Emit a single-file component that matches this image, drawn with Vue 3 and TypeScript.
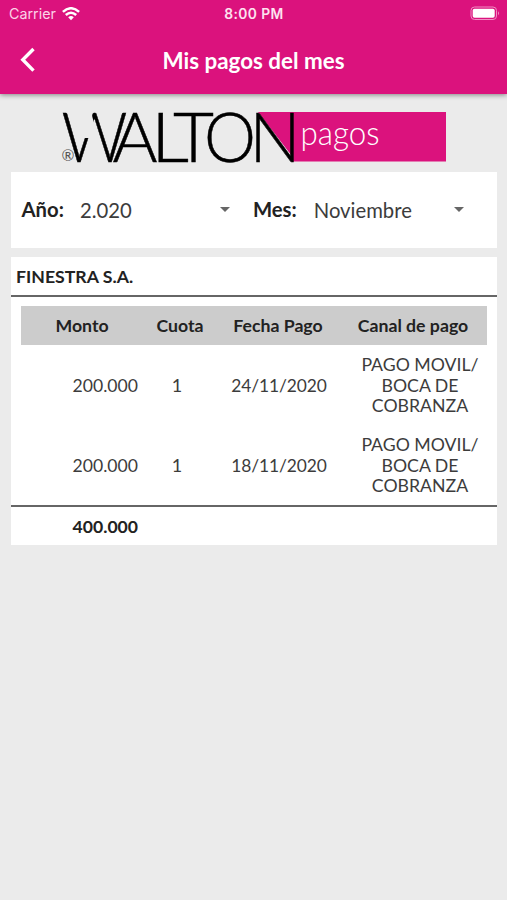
<script setup lang="ts">
interface Payment {
  amount: string
  installment: number
  date: string
  channel: string[]
}

interface LogoLetter {
  char: string
  x: number
  width: number
}

const columns: string[] = ['Monto', 'Cuota', 'Fecha Pago', 'Canal de pago']

const payments: Payment[] = [
  { amount: '200.000', installment: 1, date: '24/11/2020', channel: ['PAGO MOVIL/', 'BOCA DE', 'COBRANZA'] },
  { amount: '200.000', installment: 1, date: '18/11/2020', channel: ['PAGO MOVIL/', 'BOCA DE', 'COBRANZA'] },
]

const total = '400.000'

const letters: LogoLetter[] = [
  { char: 'A', x: 50.5, width: 45 },
  { char: 'L', x: 89, width: 38 },
  { char: 'T', x: 111, width: 41 },
  { char: 'O', x: 142, width: 52 },
  { char: 'N', x: 187.5, width: 51 },
]
</script>

<template>
  <div class="screen">
    <header class="top">
      <div class="status">
        <div class="carrier">
          <span>Carrier</span>
          <svg width="18" height="14" viewBox="0 0 18 14" fill="none" stroke="#fff" stroke-width="2.5">
            <path d="M0.9 4.9Q9-2.4 17.1 4.9" />
            <path d="M3.8 8Q9 3.4 14.2 8" />
            <path d="M6.2 10.2Q9 7.6 11.8 10.2L9 13.2Z" fill="#fff" stroke="none" />
          </svg>
        </div>
        <span class="clock">8:00 PM</span>
        <svg class="battery" width="31" height="15" viewBox="0 0 31 15">
          <rect x="1" y="1" width="25.5" height="12.5" rx="3.5" fill="none" stroke="#f08cc3" />
          <rect x="2.7" y="2.7" width="22" height="9" rx="1.8" fill="#fff" />
          <path d="M28 5.2Q30 7.2 28 9.3Z" fill="#f08cc3" />
        </svg>
      </div>
      <nav class="bar">
        <svg class="back" width="16" height="26" viewBox="0 0 16 26" fill="none" stroke="#fff" stroke-width="3.4">
          <path d="M13.5 2L2.8 12.8L13.5 23.6" />
        </svg>
        <h1>Mis pagos del mes</h1>
      </nav>
    </header>

    <svg class="logo" width="386" height="56" viewBox="0 0 386 56">
      <rect x="231" y="3" width="153" height="49.5" fill="#db127d" />
      <path d="M196 3H233V51Z" fill="#db127d" />
      <text class="letter" x="-0.5" y="52.5" textLength="66" lengthAdjust="spacingAndGlyphs">W</text>
      <!-- opening in the middle of the W -->
      <path d="M8 0H28L36.5 29H18Z" fill="#ebebeb" />
      <text
        v-for="letter in letters"
        :key="letter.char"
        class="letter"
        :x="letter.x"
        y="52.5"
        :textLength="letter.width"
        lengthAdjust="spacingAndGlyphs"
      >{{ letter.char }}</text>
      <text class="registered" x="-0.5" y="51.5">®</text>
      <text class="product" x="238.5" y="35.5" textLength="79" lengthAdjust="spacingAndGlyphs">pagos</text>
    </svg>

    <section class="filters">
      <label>Año:</label>
      <div class="select year">
        <span>2.020</span>
        <i class="caret"></i>
      </div>
      <label>Mes:</label>
      <div class="select month">
        <span>Noviembre</span>
        <i class="caret"></i>
      </div>
    </section>

    <section class="card">
      <h2>FINESTRA S.A.</h2>
      <div class="table">
        <div class="row head">
          <span v-for="column in columns" :key="column">{{ column }}</span>
        </div>
        <div v-for="payment in payments" :key="payment.date" class="row">
          <span class="amount">{{ payment.amount }}</span>
          <span>{{ payment.installment }}</span>
          <span class="date">{{ payment.date }}</span>
          <span class="channel">
            <span v-for="line in payment.channel" :key="line">{{ line }}</span>
          </span>
        </div>
      </div>
      <footer class="total">{{ total }}</footer>
    </section>
  </div>
</template>

<style>
body {
  background: #ebebeb;
}
</style>

<style scoped>
.screen {
  box-sizing: border-box;
  min-height: 900px;
  background: #ebebeb;
  color: #3c3c3c;
  font-family: Lato, sans-serif;
}

.top {
  height: 94px;
  background: #db127d;
  color: #fff;
  box-shadow: 0 1px 5px rgba(0, 0, 0, 0.45);
}

.status {
  display: grid;
  grid-template-columns: 1fr auto 1fr;
  align-items: center;
  height: 27px;
  padding: 0 6px 0 9px;
  font: 400 14.3px Inter, sans-serif;
}

.carrier {
  display: flex;
  align-items: center;
  gap: 6px;
  color: #fbd3e8;
}

.clock {
  margin-right: 2px;
  font-weight: 600;
  font-size: 13.8px;
  letter-spacing: 0.4px;
  color: #fde3f0;
}

.battery {
  justify-self: end;
}

.bar {
  display: grid;
  grid-template-columns: 36px 1fr 36px;
  align-items: center;
  height: 66px;
}

.back {
  justify-self: end;
}

h1 {
  margin: 0;
  text-align: center;
  font-size: 22.4px;
  font-weight: 700;
}

.logo {
  display: block;
  margin: 15px 0 6.5px 62px;
  overflow: visible;
}

.letter {
  font: 300 69px Lato, sans-serif;
  fill: #000;
  stroke: #000;
  stroke-width: 0.5px;
}

.registered {
  font: 400 15.5px Lato, sans-serif;
  fill: #555;
}

.product {
  font: 300 33px Lato, sans-serif;
  fill: #fff;
}

.filters {
  display: flex;
  align-items: center;
  box-sizing: border-box;
  height: 76.5px;
  margin: 0 10px 8.5px 11px;
  padding-left: 10.5px;
  background: #fff;
  font-size: 20.3px;
}

label {
  padding-bottom: 1px;
  color: #222;
  font-weight: 700;
}

.select {
  display: flex;
  align-items: center;
  justify-content: space-between;
}

.year {
  width: 150px;
  margin: 0 23px 0 16px;
}

.month {
  width: 150px;
  margin-left: 17px;
}

.caret {
  border: 5.5px solid transparent;
  border-top-color: #666;
  border-bottom: 0;
}

.card {
  margin: 0 10px 0 11px;
  background: #fff;
  font-size: 18px;
}

h2 {
  height: 38.5px;
  margin: 0;
  padding-left: 5px;
  border-bottom: 2px solid #666;
  color: #222;
  font-size: 17.7px;
  line-height: 39.5px;
}

.table {
  padding: 9px 10px 0;
}

.row {
  display: grid;
  grid-template-columns: 117px 78px 126px 1fr;
  align-items: center;
  height: 80px;
  text-align: center;
}

.head {
  grid-template-columns: 122px 74px 122px 1fr;
  height: 39px;
  background: #ccc;
  color: #222;
  font-size: 17.7px;
  font-weight: 700;
}

.amount {
  font-size: 17.6px;
  text-align: right;
}

.date {
  font-size: 17.4px;
  letter-spacing: -0.1px;
}

.channel {
  display: flex;
  flex-direction: column;
  padding: 2px 0 0 11px;
  font-size: 17.7px;
  line-height: 20.7px;
}

.total {
  box-sizing: border-box;
  height: 40px;
  padding-right: 359px;
  border-top: 2px solid #666;
  color: #222;
  font-size: 17.6px;
  font-weight: 700;
  line-height: 39px;
  text-align: right;
}
</style>
